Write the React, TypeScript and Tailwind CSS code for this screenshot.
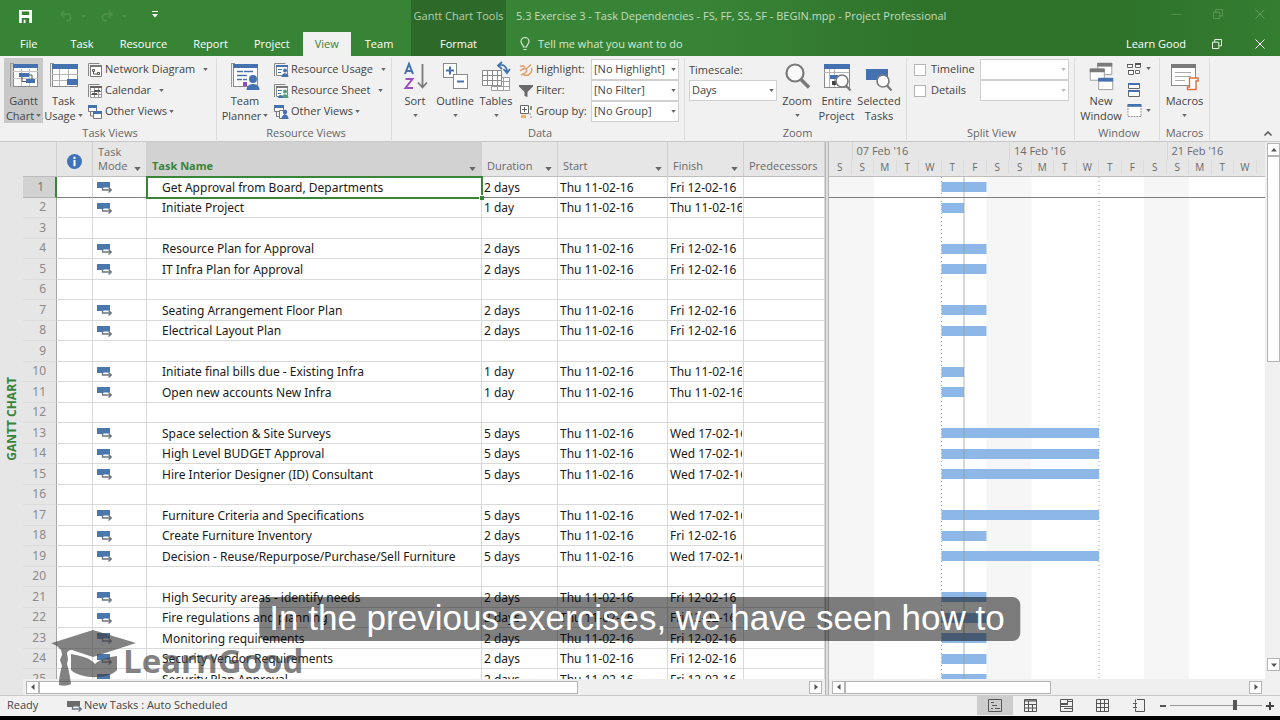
import React from "react";

interface Task {
  id: number;
  name?: string;
  days?: number;
}

const tasks: Task[] = [
  { id: 1, name: "Get Approval from Board, Departments", days: 2 },
  { id: 2, name: "Initiate Project", days: 1 },
  { id: 3 },
  { id: 4, name: "Resource Plan for Approval", days: 2 },
  { id: 5, name: "IT Infra Plan for Approval", days: 2 },
  { id: 6 },
  { id: 7, name: "Seating Arrangement Floor Plan", days: 2 },
  { id: 8, name: "Electrical Layout Plan", days: 2 },
  { id: 9 },
  { id: 10, name: "Initiate final bills due - Existing Infra", days: 1 },
  { id: 11, name: "Open new accounts New Infra", days: 1 },
  { id: 12 },
  { id: 13, name: "Space selection & Site Surveys", days: 5 },
  { id: 14, name: "High Level BUDGET Approval", days: 5 },
  { id: 15, name: "Hire Interior Designer (ID) Consultant", days: 5 },
  { id: 16 },
  { id: 17, name: "Furniture Criteria and Specifications", days: 5 },
  { id: 18, name: "Create Furniture Inventory", days: 2 },
  { id: 19, name: "Decision - Reuse/Repurpose/Purchase/Sell Furniture", days: 5 },
  { id: 20 },
  { id: 21, name: "High Security areas - identify needs", days: 2 },
  { id: 22, name: "Fire regulations and planning", days: 2 },
  { id: 23, name: "Monitoring requirements", days: 2 },
  { id: 24, name: "Security Vendor Requirements", days: 2 },
  { id: 25, name: "Security Plan Approval", days: 2 },
];

const finishDates: Record<number, string> = {
  1: "Thu 11-02-16",
  2: "Fri 12-02-16",
  5: "Wed 17-02-16",
};

// calendar days covered, 5 working days run over the weekend
const spans: Record<number, number> = { 1: 1, 2: 2, 5: 7 };

const dayLetters = "SSMTWTFSSMTWTFSSMTW".split("");
const DAYS_VISIBLE = 436 / 22.5;
const dayPct = (d: number) => `${(d / DAYS_VISIBLE) * 100}%`;
const rowTop = (i: number) => Math.ceil(i * 20.5);

const BLUE = "#4472b0";
const GREY = "#7a7a7a";

const Caret = ({ className = "text-[#666]" }: { className?: string }) => (
  <svg viewBox="0 0 6 4" className={`inline-block h-[3px] w-[5px] shrink-0 ${className}`} aria-hidden="true">
    <path d="M0 0h6L3 4z" fill="currentColor" />
  </svg>
);

/* ---------- icons ---------- */

const GanttIcon = () => (
  <svg viewBox="0 0 30 28" className="h-7 w-[30px]">
    <path d="M1.500 25V1.500M1 1.500h4" stroke="#999" fill="none" />
    <rect x="4.500" y="2.500" width="24" height="22" fill="#fff" stroke="#8a8a8a" />
    <rect x="4" y="2" width="25" height="4" fill={BLUE} />
    <path d="M12.500 7v17M20.500 7v17M4 9.500h25M4 16.500h25" stroke="#c4c4c4" />
    <rect x="10" y="11" width="10" height="4" fill={BLUE} />
    <rect x="17" y="17" width="9" height="4" fill={BLUE} />
    <path d="M13 15v4.500h4M20 13h3v4" stroke="#555" fill="none" />
  </svg>
);

const TaskUsageIcon = () => (
  <svg viewBox="0 0 30 28" className="h-7 w-[30px]">
    <path d="M1.500 25V1.500M1 1.500h4" stroke="#999" fill="none" />
    <rect x="3.500" y="2.500" width="25" height="22" fill="#fff" stroke="#8a8a8a" />
    <rect x="3" y="2" width="26" height="5" fill={BLUE} />
    <path d="M10.500 7v17M3 12.500h26M3 18.500h26M19.500 7v10" stroke="#b4b4b4" />
    <rect x="18" y="17" width="11" height="6" fill={BLUE} />
  </svg>
);

const PlannerIcon = () => (
  <svg viewBox="0 0 30 28" className="h-7 w-[30px]">
    <path d="M1.500 25V1.500M1 1.500h4" stroke="#999" fill="none" />
    <rect x="3.500" y="2.500" width="24" height="22" fill="#fff" stroke="#8a8a8a" />
    <rect x="3" y="2" width="25" height="4" fill={BLUE} />
    <path d="M7 9.500h6M14 9.500h9M7 13.500h10M7 17.500h5M13 17.500h4" stroke={BLUE} strokeWidth="1.600" />
    <rect x="13" y="20" width="4" height="4" fill="#8b4fb5" />
    <circle cx="23" cy="17" r="4" fill={BLUE} />
    <path d="M16.500 28c0-8 13-8 13 0z" fill={BLUE} />
  </svg>
);

const SortIcon = () => (
  <svg viewBox="0 0 28 30" className="h-[30px] w-7">
    <path d="M4 13L8 3l4 10M5.500 10h5" stroke={BLUE} strokeWidth="2" fill="none" />
    <path d="M4.500 18h7l-7 9H12" stroke="#9a4fc0" strokeWidth="2" fill="none" />
    <path d="M21.500 3v23M17 21.500l4.500 5 4.500-5" stroke={GREY} strokeWidth="1.800" fill="none" />
  </svg>
);

const OutlineIcon = () => (
  <svg viewBox="0 0 28 30" className="h-[30px] w-7">
    <rect x="2.500" y="2.500" width="13" height="14" fill="#fff" stroke="#888" />
    <path d="M9 5.500v8M5 9.500h8" stroke={BLUE} strokeWidth="2" />
    <rect x="12.500" y="13.500" width="14" height="14" fill="#fff" stroke="#888" />
    <path d="M16 20.500h7" stroke={BLUE} strokeWidth="2" />
  </svg>
);

const TablesIcon = () => (
  <svg viewBox="0 0 30 30" className="h-[30px] w-[30px]">
    <path d="M10.500 16.500h18v13h-18zM16.500 16v13M22.500 16v13M10 20.500h19M10 25.500h19" fill="#fff" stroke="#a0a0a0" />
    <path d="M1.500 9.500h19v15h-19zM6.500 9v15M11.500 9v15M16.500 9v15M1 14.500h20M1 19.500h20" fill="#fff" stroke="#8a8a8a" />
    <path d="M17 4.500c5-2 9 1 9 6M21 1l-4 3.500L21 8M22.500 8l3.500 4 3-4" stroke={BLUE} strokeWidth="1.800" fill="none" />
  </svg>
);

const ZoomIcon = () => (
  <svg viewBox="0 0 30 30" className="h-[30px] w-[30px]">
    <circle cx="13" cy="12" r="8.500" fill="#fafafa" stroke={GREY} strokeWidth="2.200" />
    <path d="M19 18.500l8 8" stroke={GREY} strokeWidth="3.600" />
  </svg>
);

const EntireIcon = () => (
  <svg viewBox="0 0 30 30" className="h-[30px] w-[30px]">
    <rect x="2.500" y="3.500" width="25" height="23" fill="#fff" stroke="#8a8a8a" />
    <rect x="2" y="3" width="26" height="5" fill={BLUE} />
    <path d="M7.500 8v18M2 11.500h25M12.500 8v18" stroke="#b5b5b5" />
    <rect x="8" y="14" width="8" height="4" fill={BLUE} />
    <rect x="10" y="20" width="4" height="4" fill="#444" />
    <circle cx="20" cy="20" r="6" fill="#fff" stroke={GREY} strokeWidth="1.600" />
    <path d="M24 24.500l4.500 5" stroke={GREY} strokeWidth="2.200" />
  </svg>
);

const SelectedIcon = () => (
  <svg viewBox="0 0 30 30" className="h-[30px] w-[30px]">
    <rect x="2" y="8" width="22" height="11" fill={BLUE} />
    <circle cx="19" cy="20" r="6" fill="#fff" stroke={GREY} strokeWidth="1.600" />
    <path d="M23 24.500l4.500 5" stroke={GREY} strokeWidth="2.200" />
  </svg>
);

const NewWindowIcon = () => (
  <svg viewBox="0 0 28 32" className="h-[30px] w-7">
    <path d="M10.500 2.500h15v12h-15z" fill="#fff" stroke="#999" />
    <path d="M10 2h16v4H10z" fill={GREY} />
    <path d="M2.500 8.500h15v12h-15z" fill="#fff" stroke="#999" />
    <path d="M2 8h16v4H2z" fill={GREY} />
    <path d="M11.500 18.500h15v12h-15z" fill="#fff" stroke="#999" />
    <path d="M11 18h16v4H11z" fill={BLUE} />
  </svg>
);

const MacrosIcon = () => (
  <svg viewBox="0 0 30 30" className="h-[30px] w-[30px]">
    <rect x="1.500" y="3.500" width="24" height="21" fill="#fff" stroke="#8a8a8a" />
    <rect x="1" y="3" width="25" height="4" fill={GREY} />
    <path d="M5 11.500h16M5 15.500h16M5 19.500h10" stroke="#aaa" />
    <path d="M19.500 17h8.500v3h-2v8.500h-8.500v-2.500h2z" fill="#fff" stroke="#e0703a" strokeWidth="1.400" />
  </svg>
);

const NetworkIcon = () => (
  <svg viewBox="0 0 14 14" className="h-[14px] w-[14px]">
    <path d="M.5 13V.5h11" stroke="#888" fill="none" />
    <path d="M2.500 2.500h11v11h-11z" fill="#fff" stroke="#777" />
    <path d="M2 2h12v2H2z" fill="#777" />
    <path d="M4.500 6.500h2v2h-2zM9.500 9.500h2v2h-2zM5.500 8v3H9" fill="none" stroke="#555" />
  </svg>
);

const CalendarIcon = () => (
  <svg viewBox="0 0 14 14" className="h-[14px] w-[14px]">
    <path d="M.5 13V.5h11" stroke="#888" fill="none" />
    <path d="M2.500 2.500h11v11h-11zM2 7.500h12M2 10.500h12M6.500 4v10M10.500 4v10" fill="#fff" stroke="#999" />
    <path d="M2 2h12v2H2z" fill="#666" />
    <path d="M6 6h6v2H6zM4 9h5v2H4z" fill="#555" />
  </svg>
);

const ViewsIcon = () => (
  <svg viewBox="0 0 14 14" className="h-[14px] w-[14px]">
    <path d="M.5.5h8v6h-8zM5.500 6.500h8v7h-8z" fill="#fff" stroke="#777" />
    <path d="M0 0h9v3H0zM5 6h9v3H5z" fill={BLUE} />
    <path d="M2.500 7v4H5" stroke="#777" fill="none" />
  </svg>
);

const PersonViewIcon = ({ green }: { green?: boolean }) => (
  <svg viewBox="0 0 15 14" className="h-[14px] w-[15px]">
    <path d="M.5 13V.5h11" stroke="#888" fill="none" />
    <path d="M2.500 2.500h11v10h-11z" fill="#fff" stroke="#888" />
    <path d="M2 2h12v2H2z" fill={green ? "#777" : BLUE} />
    <path d="M4 6.500h4M4 9.500h3" stroke={BLUE} />
    <circle cx="11" cy="7.500" r="2" fill={green ? "#4f9e74" : BLUE} />
    <path d="M7.500 14c0-5 7-5 7 0z" fill={green ? "#4f9e74" : BLUE} />
    {green && <path d="M4 14c0-4 5-4 5 0z" fill={BLUE} />}
  </svg>
);

const OtherResourceIcon = () => (
  <svg viewBox="0 0 15 14" className="h-[14px] w-[15px]">
    <path d="M.5.5h9v6h-9z" fill="#fff" stroke="#777" />
    <path d="M0 0h10v3H0z" fill={BLUE} />
    <path d="M2.500 7v4.500H5M5.500 5.500h5v8h-5z" stroke="#777" fill="#fff" />
    <circle cx="11" cy="7" r="2.200" fill={BLUE} />
    <path d="M7.500 14c0-6 7-6 7 0z" fill={BLUE} />
  </svg>
);

const HighlightIcon = () => (
  <svg viewBox="0 0 14 14" className="h-[14px] w-[14px]">
    <path d="M1 3.500c2-1 4-1 5 1M1 8c3-3 6-3 6.500-1S5 11 2 12" stroke="#e8a27c" strokeWidth="1.600" fill="none" />
    <path d="M7 6l5-4.500M12.500 5c1 4-2 7.500-6 7.500L3 11" stroke="#dba05a" strokeWidth="1.400" fill="none" />
  </svg>
);

const FilterIcon = () => (
  <svg viewBox="0 0 14 14" className="h-[14px] w-[14px]">
    <path d="M0 1h14v1.500L8.500 8v5l-3-1V8L0 2.500z" fill="#6a6a6a" />
  </svg>
);

const GroupIcon = () => (
  <svg viewBox="0 0 14 14" className="h-[14px] w-[14px]">
    <path d="M1.500.5h8v8h-8zM5.500 2v5M3 4.500h5" stroke="#666" fill="#fff" />
    <path d="M11 1h2v4h-2z" fill="#7aa06a" />
    <path d="M2 10h5v3H2z" fill="#f0b268" />
    <path d="M11 8v2M11 12h2" stroke="#999" />
  </svg>
);

const ModeIcon = ({ grey }: { grey?: boolean }) => (
  <svg viewBox="0 0 16 12" className="block h-3 w-4">
    <rect x="0" y="1" width="13" height="6" fill={grey ? "#6a6a6a" : "#4a78ad"} />
    <path d="M6.500 8.500H14" stroke="#fff" strokeWidth="4" fill="none" />
    <path d="M5.500 7v2H14M11.500 6.500l2.800 2.500-2.800 2.500" stroke="#6b7580" strokeWidth="1.300" fill="none" />
  </svg>
);

const RestoreIcon = () => (
  <svg viewBox="0 0 11 11" className="h-[10px] w-[10px]">
    <path d="M.5 3.500h7v7h-7zM3 3.500V.5h7.500v7H8" stroke="currentColor" fill="none" />
  </svg>
);

const CloseIcon = () => (
  <svg viewBox="0 0 10 10" className="h-[10px] w-[10px]">
    <path d="M.5.5l9 9M9.500.5l-9 9" stroke="currentColor" fill="none" />
  </svg>
);

/* ---------- title bar and tabs ---------- */

const TitleBar = () => (
  <header className="flex h-8 shrink-0 items-stretch">
    <div className="flex w-[411px] shrink-0 items-center pl-[19px] text-white">
      <button aria-label="Save" className="w-[40px]">
        <svg viewBox="0 0 14 14" className="h-[13px] w-[13px]">
          <path d="M0 0h14v14H0z" fill="#fff" />
          <path d="M3 1.500h8v4H3zM3 8.500h8V14H3z" fill="#347f31" />
          <path d="M5 10.500h2V14H5z" fill="#fff" />
        </svg>
      </button>
      <button aria-label="Undo" className="flex w-[41px] items-center gap-2 text-[#4b9147]">
        <svg viewBox="0 0 14 13" className="h-3 w-[14px]">
          <path d="M5 1L1.500 4.500 5 8M2 4.500h7c4 0 4 7 0 7H7" stroke="currentColor" strokeWidth="1.800" fill="none" />
        </svg>
        <Caret className="text-[#4b9147]" />
      </button>
      <button aria-label="Redo" className="flex w-[52px] items-center gap-2 text-[#4b9147]">
        <svg viewBox="0 0 14 13" className="h-3 w-[14px]">
          <path d="M9 1l3.500 3.500L9 8M12 4.500H5c-4 0-4 7 0 7h2" stroke="currentColor" strokeWidth="1.800" fill="none" />
        </svg>
        <Caret className="text-[#4b9147]" />
      </button>
      <button aria-label="Customize Quick Access Toolbar" className="pb-1">
        <svg viewBox="0 0 6 7" className="h-[7px] w-[6px]">
          <path d="M0 .5h6" stroke="#fff" />
          <path d="M0 3h6L3 6.500z" fill="#fff" />
        </svg>
      </button>
    </div>
    <div className="flex w-[95px] shrink-0 items-center justify-center bg-[#2d6a29] pt-px whitespace-nowrap text-[#b3cfb1]">
      Gantt Chart Tools
    </div>
    <h1 className="flex flex-1 items-center pt-px pl-[10px] whitespace-nowrap text-[#c3dcc1]">
      5.3 Exercise 3 - Task Dependencies - FS, FF, SS, SF - BEGIN.mpp - Project Professional
    </h1>
    <div className="flex items-center gap-8 pr-[15px] pb-1 text-[#5f9a5c]">
      <button aria-label="Minimize" className="h-px w-[10px] bg-[#4f8c4b]" />
      <button aria-label="Restore"><RestoreIcon /></button>
      <button aria-label="Close"><CloseIcon /></button>
    </div>
  </header>
);

const TabBar = () => (
  <nav className="flex h-6 shrink-0 items-stretch whitespace-nowrap text-white">
    <div className="flex w-[411px] shrink-0">
      <button className="pr-5 pl-5">File</button>
      {["Task", "Resource", "Report", "Project"].map((t) => (
        <button key={t} className="px-[13px]">{t}</button>
      ))}
      <button className="bg-[#f1f1f1] px-[12px] text-[#3a7d36]">View</button>
      <button className="px-[14px]">Team</button>
    </div>
    <button className="w-[95px] shrink-0 bg-[#2d6a29]">Format</button>
    <button className="flex items-center gap-2 pl-[14px] text-[#d5e8d3]">
      <svg viewBox="0 0 10 14" className="h-[14px] w-[10px]">
        <path d="M3.500 10c0-2-2.500-3-2.500-5.500a4 4 0 018 0C9 7 6.500 8 6.500 10zM3.500 12.500h3" stroke="currentColor" strokeWidth="1.200" fill="none" />
      </svg>
      Tell me what you want to do
    </button>
    <div className="ml-auto flex items-center pr-[15px]">
      <span className="pr-[26px]">Learn Good</span>
      <button aria-label="Restore document" className="pr-[33px]"><RestoreIcon /></button>
      <button aria-label="Close document"><CloseIcon /></button>
    </div>
  </nav>
);

/* ---------- ribbon ---------- */

interface GroupProps {
  label: string;
  className: string;
  children: React.ReactNode;
}

const Group = ({ label, className, children }: GroupProps) => (
  <section className={`flex shrink-0 flex-col border-r border-[#dcdcdc] ${className}`}>
    <div className="flex h-[67px] items-start">{children}</div>
    <div className="mt-auto text-center leading-[14px] text-[#666]">{label}</div>
  </section>
);

interface BigButtonProps {
  icon: React.ReactNode;
  lines: string[];
  caret?: boolean;
  className: string;
}

const BigButton = ({ icon, lines, caret, className }: BigButtonProps) => (
  <button className={`flex shrink-0 flex-col items-center whitespace-nowrap ${className}`}>
    <span className="flex h-[35px] items-center">{icon}</span>
    <span className="leading-[15px]">{lines[0]}</span>
    <span className="flex h-[15px] items-center gap-[2px] leading-[15px]">
      {lines[1]}
      {caret && <Caret />}
    </span>
  </button>
);

const SmallButton = ({ icon, label, gap }: { icon: React.ReactNode; label: string; gap?: boolean }) => (
  <button className="flex h-[21px] items-center whitespace-nowrap">
    <span className="w-[17px]">{icon}</span>
    <span className={gap ? "pr-2" : "pr-[2px]"}>{label}</span>
    <Caret />
  </button>
);

const Dropdown = ({ id, value, label }: { id: string; value: string; label?: string }) => (
  <div className="relative flex-1">
    <select
      id={id}
      aria-label={label}
      className="block h-[21px] w-full appearance-none border border-[#d0d0d0] bg-white px-[2px] text-[#444]"
    >
      <option>{value}</option>
    </select>
    <span className="pointer-events-none absolute inset-y-0 right-[3px] flex items-center">
      <Caret className={value ? "text-[#666]" : "text-[#bbb]"} />
    </span>
  </div>
);

const dataFields = [
  { id: "highlight", label: "Highlight:", value: "[No Highlight]", icon: <HighlightIcon /> },
  { id: "filter", label: "Filter:", value: "[No Filter]", icon: <FilterIcon /> },
  { id: "group", label: "Group by:", value: "[No Group]", icon: <GroupIcon /> },
];

const Ribbon = () => (
  <div className="flex h-[86px] shrink-0 border-b border-[#c8c8c8] bg-[#f1f1f1] pt-[2px] pb-px text-[#444]">
    <Group label="Task Views" className="w-[217px] pl-1">
      <BigButton icon={<GanttIcon />} lines={["Gantt", "Chart"]} caret className="w-[39px] bg-[#c8c8c8]" />
      <BigButton icon={<TaskUsageIcon />} lines={["Task", "Usage"]} caret className="w-[41px]" />
      <div className="flex flex-col pt-px pl-1">
        <SmallButton icon={<NetworkIcon />} label="Network Diagram" gap />
        <SmallButton icon={<CalendarIcon />} label="Calendar" gap />
        <SmallButton icon={<ViewsIcon />} label="Other Views" />
      </div>
    </Group>
    <Group label="Resource Views" className="w-[175px] pl-1">
      <BigButton icon={<PlannerIcon />} lines={["Team", "Planner"]} caret className="w-12" />
      <div className="flex flex-col pt-px pl-[5px]">
        <SmallButton icon={<PersonViewIcon />} label="Resource Usage" gap />
        <SmallButton icon={<PersonViewIcon green />} label="Resource Sheet" gap />
        <SmallButton icon={<OtherResourceIcon />} label="Other Views" />
      </div>
    </Group>
    <Group label="Data" className="w-[293px] pl-1">
      <BigButton icon={<SortIcon />} lines={["Sort", ""]} caret className="w-[38px]" />
      <BigButton icon={<OutlineIcon />} lines={["Outline", ""]} caret className="w-[42px]" />
      <BigButton icon={<TablesIcon />} lines={["Tables", ""]} caret className="w-10" />
      <div className="flex flex-1 flex-col pt-px pr-[5px] pl-[3px]">
        {dataFields.map((f) => (
          <div key={f.id} className="flex h-[21px] items-center">
            <span className="w-[17px]">{f.icon}</span>
            <label htmlFor={f.id} className="w-[55px] whitespace-nowrap">{f.label}</label>
            <Dropdown id={f.id} value={f.value} />
          </div>
        ))}
      </div>
    </Group>
    <Group label="Zoom" className="w-[222px] pl-1">
      <div className="flex w-[88px] flex-col pt-px">
        <label htmlFor="timescale" className="leading-[21px]">Timescale:</label>
        <div className="flex">
          <Dropdown id="timescale" value="Days" />
        </div>
      </div>
      <BigButton icon={<ZoomIcon />} lines={["Zoom", ""]} caret className="w-10" />
      <BigButton icon={<EntireIcon />} lines={["Entire", "Project"]} className="w-[39px]" />
      <BigButton icon={<SelectedIcon />} lines={["Selected", "Tasks"]} className="w-[46px]" />
    </Group>
    <Group label="Split View" className="w-[168px] pr-[5px] pl-[7px]">
      <div className="flex flex-1 flex-col pt-px">
        {["Timeline", "Details"].map((name) => (
          <div key={name} className="flex h-[21px] items-center">
            <input
              id={name}
              type="checkbox"
              className="h-3 w-3 appearance-none border border-[#b5b5b5] bg-white checked:bg-[#3e6db5]"
            />
            <label htmlFor={name} className="w-[54px] pl-[5px]">{name}</label>
            <Dropdown id={`${name}-view`} value="" label={`${name} view`} />
          </div>
        ))}
      </div>
    </Group>
    <Group label="Window" className="w-[85px] pl-1">
      <BigButton icon={<NewWindowIcon />} lines={["New", "Window"]} className="w-11" />
      <div className="flex flex-col pl-1">
        <button aria-label="Switch Windows" className="flex h-[21px] items-center gap-1">
          <svg viewBox="0 0 15 12" className="h-3 w-[15px]">
            <path d="M.5 1.500h5v3h-5zM8.500.5h5v4h-5zM1.500 7.500h5v4h-5zM8.500 7.500h4v3h-4z" fill="#fff" stroke="#666" />
            <path d="M0 1h6v1H0zM8 0h6v2H8zM1 7h6v1H1z" fill="#555" />
          </svg>
          <Caret />
        </button>
        <button aria-label="Arrange All" className="flex h-[21px] items-center">
          <svg viewBox="0 0 14 14" className="h-[14px] w-[14px]">
            <path d="M1.500.5h11v5h-11zM1.500 7.500h11v6h-11z" fill="#fff" stroke="#666" />
            <path d="M1 0h12v2H1zM1 7h12v2H1z" fill={BLUE} />
          </svg>
        </button>
        <button aria-label="Hide" className="flex h-[21px] items-center gap-1">
          <svg viewBox="0 0 15 14" className="h-[13px] w-[15px]">
            <path d="M.5.5h14v13H.5z" fill="#fff" stroke="#888" strokeDasharray="2 1" />
            <path d="M0 0h15v3H0z" fill={BLUE} />
          </svg>
          <Caret />
        </button>
      </div>
    </Group>
    <Group label="Macros" className="w-[50px]">
      <BigButton icon={<MacrosIcon />} lines={["Macros", ""]} caret className="w-[49px]" />
    </Group>
    <button aria-label="Collapse the Ribbon" className="mt-auto mr-2 ml-auto pb-1">
      <svg viewBox="0 0 8 5" className="h-[5px] w-2">
        <path d="M.5 4.500L4 1l3.500 3.500" stroke="#555" strokeWidth="1.500" fill="none" />
      </svg>
    </button>
  </div>
);

/* ---------- task sheet ---------- */

const HeadCell = ({ label, arrow, className = "" }: { label: string; arrow?: boolean; className?: string }) => (
  <th scope="col" className={`border-r border-[#d0d0d0] px-[5px] pb-[3px] text-left align-bottom font-normal ${className}`}>
    <span className="flex items-end justify-between leading-[14px]">
      {label}
      {arrow && (
        <svg viewBox="0 0 8 5" className="mb-[2px] h-[4px] w-[7px] shrink-0">
          <path d="M0 0h8L4 5z" fill="#666" />
        </svg>
      )}
    </span>
  </th>
);

const cell = "border-r border-b border-[#d9d9d9] overflow-hidden whitespace-nowrap p-0";

const TaskSheet = () => (
  <div className="min-h-0 flex-1 overflow-hidden bg-white">
    <table className="w-full table-fixed border-separate border-spacing-0 font-['Noto_Sans',sans-serif] text-xs text-[#1a1a1a]">
      <colgroup>
        <col className="w-[34px]" />
        <col className="w-9" />
        <col className="w-[54px]" />
        <col className="w-[335px]" />
        <col className="w-[76px]" />
        <col className="w-[110px]" />
        <col className="w-[76px]" />
        <col />
      </colgroup>
      <thead className="bg-[#e6e6e6] font-['Open_Sans',sans-serif] text-[11px] text-[#6a6a6a]">
        <tr className="h-[35px] *:border-b *:border-b-[#bdbdbd]">
          <th className="border-r border-[#d0d0d0]" aria-label="ID" />
          <th className="border-r border-[#d0d0d0] p-0 align-middle" aria-label="Indicators">
            <svg viewBox="0 0 16 16" className="mx-auto mt-1 h-[15px] w-[15px]">
              <circle cx="8" cy="8" r="8" fill="#3f74b8" />
              <path d="M8 3v2.200M8 6.500V13" stroke="#fff" strokeWidth="2.200" />
            </svg>
          </th>
          <HeadCell label="Task Mode" arrow />
          <HeadCell label="Task Name" arrow className="bg-[#d2d2d2] font-bold! text-[#388438]" />
          <HeadCell label="Duration" arrow />
          <HeadCell label="Start" arrow />
          <HeadCell label="Finish" arrow />
          <HeadCell label="Predecessors" />
        </tr>
      </thead>
      <tbody>
        {tasks.map((t, i) => {
          const selected = i === 0;
          const line = selected ? "border-b-[#7f7f7f]" : "";
          return (
            <tr key={t.id} className="h-5 odd:h-[21px]">
              <th
                scope="row"
                className={
                  selected
                    ? "border-r-2 border-b border-[#b5b5b5] border-r-[#388438] bg-[#d2d2d2] p-0 pr-[11px] text-right font-normal text-[#777]"
                    : "border-r border-b border-[#dcdcdc] border-r-[#a5a5a5] bg-[#e6e6e6] p-0 pr-[10px] text-right font-normal text-[#8a8a8a]"
                }
              >
                <div className="h-[19px] leading-[17px]">{t.id}</div>
              </th>
              <td className={`${cell} ${line}`} />
              <td className={`${cell} ${line}`}>
                {t.name && <div className="pl-1"><ModeIcon /></div>}
              </td>
              <td className={selected ? "relative p-0 outline-2 -outline-offset-1 outline-[#388438]" : cell}>
                <div className="h-[19px] overflow-hidden pl-[15px] leading-[19px] whitespace-nowrap">{t.name}</div>
                {selected && <span className="absolute right-[-2px] bottom-[-2px] h-[5px] w-[5px] border-t border-l border-white bg-[#388438]" />}
              </td>
              <td className={`${cell} ${line}`}>
                <div className="h-[19px] pl-[2px] leading-[19px]">
                  {t.days && `${t.days} ${t.days > 1 ? "days" : "day"}`}
                </div>
              </td>
              <td className={`${cell} ${line}`}>
                <div className="h-[19px] pl-[2px] leading-[19px]">{t.days && "Thu 11-02-16"}</div>
              </td>
              <td className={`${cell} ${line}`}>
                <div className="mr-px h-[19px] overflow-hidden pl-[2px] leading-[19px]">{t.days && finishDates[t.days]}</div>
              </td>
              <td className={`${cell} ${line}`} />
            </tr>
          );
        })}
      </tbody>
    </table>
  </div>
);

/* ---------- timeline ---------- */

const Timeline = () => (
  <div className="flex min-h-0 flex-1 flex-col overflow-hidden bg-white">
    <div className="h-[35px] shrink-0 overflow-hidden border-b border-[#bdbdbd] bg-[#e6e6e6] text-[#6a6a6a]">
      <div className="grid grid-cols-[45fr_315fr_315fr_197fr] leading-[18px] whitespace-nowrap">
        <span />
        {["07 Feb '16", "14 Feb '16", "21 Feb '16"].map((w) => (
          <span key={w} className="border-l border-[#d6d6d6] pl-1">{w}</span>
        ))}
      </div>
      <div className="grid grid-cols-[repeat(19,minmax(0,45fr))_17fr] text-center text-[10px] leading-[14px]">
        {dayLetters.map((d, i) => (
          <span key={i} className="border-r border-[#dcdcdc]">{d}</span>
        ))}
      </div>
    </div>
    <svg className="min-h-0 w-full flex-1" role="img" aria-label="Gantt chart">
      {[0, 7, 14].map((d) => (
        <rect key={d} x={dayPct(d)} y="0" width={dayPct(2)} height="100%" fill="#f6f6f6" />
      ))}
      {[5, 12].map((d) => (
        <line key={d} x1={dayPct(d)} x2={dayPct(d)} y1="0" y2="100%" stroke="#a0a0a0" strokeDasharray="1 3" />
      ))}
      {tasks.map((t, i) =>
        t.days ? (
          <rect key={t.id} x={dayPct(5)} y={rowTop(i) + 5} width={dayPct(spans[t.days])} height="10" fill="#8db7e6" />
        ) : null
      )}
      <line x1={dayPct(6)} x2={dayPct(6)} y1="0" y2="100%" stroke="#8f9a8f" strokeOpacity="0.700" />
      <line x1="0" x2="100%" y1="20.500" y2="20.500" stroke="#7f7f7f" />
    </svg>
  </div>
);

const scrollBtn = "flex h-[13px] w-[13px] shrink-0 items-center justify-center border border-[#b5b5b5] bg-white text-[#555]";

const Arrow = ({ turn }: { turn: string }) => (
  <svg viewBox="0 0 6 6" className={`h-[6px] w-[6px] ${turn}`}>
    <path d="M0 1.500h6L3 5z" fill="currentColor" />
  </svg>
);

const HScroll = ({ thumb }: { thumb: string }) => (
  <div className="flex h-4 shrink-0 items-center bg-[#efefef] px-[3px]">
    <button aria-label="Scroll left" className={scrollBtn}><Arrow turn="rotate-90" /></button>
    <div className="h-[13px] flex-1">
      <div className={`h-full border border-[#b5b5b5] bg-white ${thumb}`} />
    </div>
    <button aria-label="Scroll right" className={scrollBtn}><Arrow turn="-rotate-90" /></button>
  </div>
);

const VScroll = () => (
  <div className="flex w-[15px] shrink-0 flex-col items-end bg-[#f0f0f0] pt-px pb-6">
    <button aria-label="Scroll up" className={scrollBtn}><Arrow turn="rotate-180" /></button>
    <div className="w-[13px] flex-1">
      <div className="h-[41%] border border-[#b5b5b5] bg-white" />
    </div>
    <button aria-label="Scroll down" className={scrollBtn}><Arrow turn="" /></button>
  </div>
);

/* ---------- status bar ---------- */

const viewIcons = [
  { label: "Gantt Chart", d: "M.5.5h13v12H.5zM3 3.500h3M4 6.500h5M7 9.500h5M3 9.500h2" },
  { label: "Task Usage", d: "M.5 1h12M.5.5h12v12H.5zM0 2h13M0 5.500h13M0 9h13M4.500 2v10M8.500 5v7" },
  { label: "Team Planner", d: "M.5.5h12v12H.5zM0 4.500h7M0 5.500h7M7.500 0v6M7 2.500h6M0 7.500h13M4 9.500h8" },
  { label: "Resource Sheet", d: "M.5.5h12v12H.5zM0 4.500h13M0 8.500h13M4.500 0v13M8.500 0v13" },
  { label: "Report", d: "M5 .5h7.500v12H3.500M3.500.5v3M3.500 9.500v3M1 4.500h4M1 8.500h4M3.500 5v3" },
];

const StatusBar = () => (
  <footer className="flex h-[21px] shrink-0 items-stretch border-t border-[#c8c8c8] bg-[#f1f1f1] pb-px text-[#444]">
    <span className="flex w-[67px] items-center pl-[7px]">Ready</span>
    <button className="flex items-center gap-px">
      <ModeIcon grey />
      New Tasks : Auto Scheduled
    </button>
    <div className="ml-auto flex text-[#555]">
      {viewIcons.map((v, i) => (
        <button
          key={v.label}
          aria-label={v.label}
          className={`flex w-9 items-center justify-center ${i === 0 ? "bg-[#cdcdcd]" : ""}`}
        >
          <svg viewBox="0 0 14 13" className="h-[13px] w-[14px]">
            <path d={v.d} stroke="currentColor" fill="none" />
          </svg>
        </button>
      ))}
    </div>
    <div className="flex items-center gap-1 pr-[6px] pl-[3px] text-[#444]">
      <button aria-label="Zoom out" className="h-[2px] w-[6px] bg-[#555]" />
      <input
        type="range"
        aria-label="Zoom"
        defaultValue={72}
        className="h-3 w-[92px] appearance-none bg-transparent [&::-webkit-slider-runnable-track]:h-px [&::-webkit-slider-runnable-track]:bg-[#999] [&::-webkit-slider-thumb]:-mt-[5px] [&::-webkit-slider-thumb]:h-[10px] [&::-webkit-slider-thumb]:w-1 [&::-webkit-slider-thumb]:appearance-none [&::-webkit-slider-thumb]:bg-[#555]"
      />
      <button aria-label="Zoom in">
        <svg viewBox="0 0 8 8" className="h-2 w-2">
          <path d="M4 0v8M0 4h8" stroke="#444" strokeWidth="2" />
        </svg>
      </button>
    </div>
  </footer>
);

const Watermark = () => (
  <div className="pointer-events-none absolute bottom-[29px] left-[51px] flex items-end text-[#404040] opacity-65">
    <svg viewBox="0 0 86 58" className="h-[58px] w-[86px]">
      <path
        d="M1 14L42 1l43 13-43 14-21-7c-3 0-5 1-5 4l1 5-1 5c2 6 3 13 4 20-3 2-8 2-12 1 0-7 1-13 3-19l-2-6 2-5c0-5-2-8-11-12z"
        fill="currentColor"
      />
      <path d="M20 25c10 2 20 4 24 10 5-5 14-7 22-8v14c-9 10-37 9-46 0z" fill="currentColor" />
    </svg>
    <span className="-ml-[14px] pb-2 text-[33px] leading-9 font-bold">LearnGood</span>
  </div>
);

export default function App() {
  return (
    <div className="relative flex h-screen flex-col overflow-hidden border-b-4 border-black bg-[#e6e6e6] font-['Open_Sans',sans-serif] text-[11px]">
      <div className="shrink-0 bg-[linear-gradient(90deg,#388436_0%,#388436_55%,#2f732b_72%,#2f732b_88%,#347d31_100%)]">
        <TitleBar />
        <TabBar />
      </div>
      <Ribbon />
      <main className="flex min-h-0 flex-1">
        <aside className="flex w-[23px] shrink-0 items-end justify-center pb-[234px]">
          <span className="rotate-180 text-xs font-bold text-[#388438] [writing-mode:vertical-rl]">GANTT CHART</span>
        </aside>
        <div className="flex min-w-0 flex-[802_1_0%] flex-col">
          <TaskSheet />
          <HScroll thumb="w-[70%]" />
        </div>
        <div className="w-1 shrink-0 border-x border-[#b5b5b5] bg-[#dedede]" />
        <div className="flex min-w-0 flex-[436_1_0%] flex-col">
          <Timeline />
          <HScroll thumb="w-[51%]" />
        </div>
        <VScroll />
      </main>
      <StatusBar />
      <Watermark />
      <p className="absolute bottom-[75px] left-1/2 -translate-x-1/2 rounded-lg bg-black/50 pt-0 pr-4 pb-[2px] pl-[10px] font-['Liberation_Sans',Arial,sans-serif] text-[35px] leading-[42px] whitespace-nowrap text-white">
        In the previous exercises, we have seen how to
      </p>
    </div>
  );
}
